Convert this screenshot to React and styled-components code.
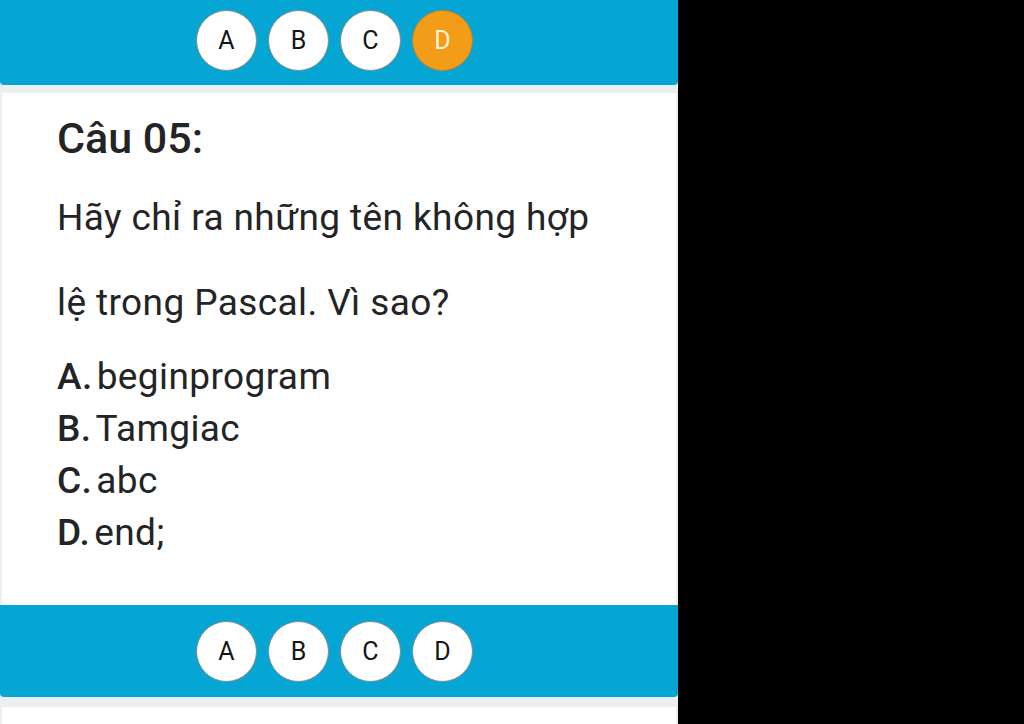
import React from "react";
import styled, { createGlobalStyle } from "styled-components";

const Global = createGlobalStyle`
  html, body { margin: 0; padding: 0; background: #000; }
  body { font-family: Roboto, "Noto Sans", "Liberation Sans", sans-serif; }
  #root { width: 1024px; height: 724px; overflow: hidden; }
`;

const Column = styled.div`
  width: 678px;
  height: 724px;
  background: #eceff2;
  display: flex;
  flex-direction: column;
`;

const Bar = styled.div`
  height: ${(p) => p.$h}px;
  background: #05a6d3;
  border-radius: 0 0 4px 4px;
  display: flex;
  align-items: center;
  justify-content: center;
  gap: 11px;
  padding: 0 9px ${(p) => p.$pb || 0}px 0;
  box-sizing: border-box;
  flex-shrink: 0;
`;

const Circle = styled.div`
  width: 61px;
  height: 61px;
  border-radius: 50%;
  box-sizing: border-box;
  border: 1px solid ${(p) => (p.$active ? "#b8822e" : "#7c8a90")};
  background: ${(p) => (p.$active ? "#f39c17" : "#fff")};
  color: ${(p) => (p.$active ? "#fff4de" : "#151515")};
  display: flex;
  align-items: center;
  justify-content: center;
  font-size: 25px;
  font-weight: 400;
`;

const Card = styled.div`
  background: #fff;
  margin: ${(p) => p.$top}px 2px 0 2px;
  padding: ${(p) => p.$pt}px 10px 0 55px;
  height: ${(p) => p.$h}px;
  box-sizing: border-box;
  color: #232425;
  flex-shrink: 0;
`;

const Title = styled.h1`
  margin: 0;
  font-size: 43px;
  line-height: 50px;
  font-weight: 500;
`;

const Question = styled.p`
  margin: 12px 0 0 0;
  font-size: 37px;
  letter-spacing: 0.4px;
  line-height: 85px;
  font-weight: 400;
`;

const Options = styled.div`
  margin-top: 6px;
  display: flex;
  flex-direction: column;
`;

const Option = styled.div`
  font-size: 37px;
  letter-spacing: 0.4px;
  line-height: 52px;
`;

const Letter = styled.span`
  font-weight: 500;
  margin-right: 4px;
`;

const letters = ["A", "B", "C", "D"];

const Picker = ({ active, h, pb }) => (
  <Bar $h={h} $pb={pb}>
    {letters.map((l) => (
      <Circle key={l} $active={l === active}>
        {l}
      </Circle>
    ))}
  </Bar>
);

const options = [
  ["A.", "beginprogram"],
  ["B.", "Tamgiac"],
  ["C.", "abc"],
  ["D.", "end;"],
];

export default function App() {
  return (
    <>
      <Global />
      <Column>
        <Picker active="D" h={85} pb={5} />
        <Card $top={8} $pt={20} $h={512}>
          <Title>Câu 05:</Title>
          <Question>
            Hãy chỉ ra những tên không hợp
            <br />
            lệ trong Pascal. Vì sao?
          </Question>
          <Options>
            {options.map(([l, t]) => (
              <Option key={l}>
                <Letter>{l}</Letter>
                {t}
              </Option>
            ))}
          </Options>
        </Card>
        <Picker h={92} />
        <Card $top={10} $pt={0} $h={40} />
      </Column>
    </>
  );
}
